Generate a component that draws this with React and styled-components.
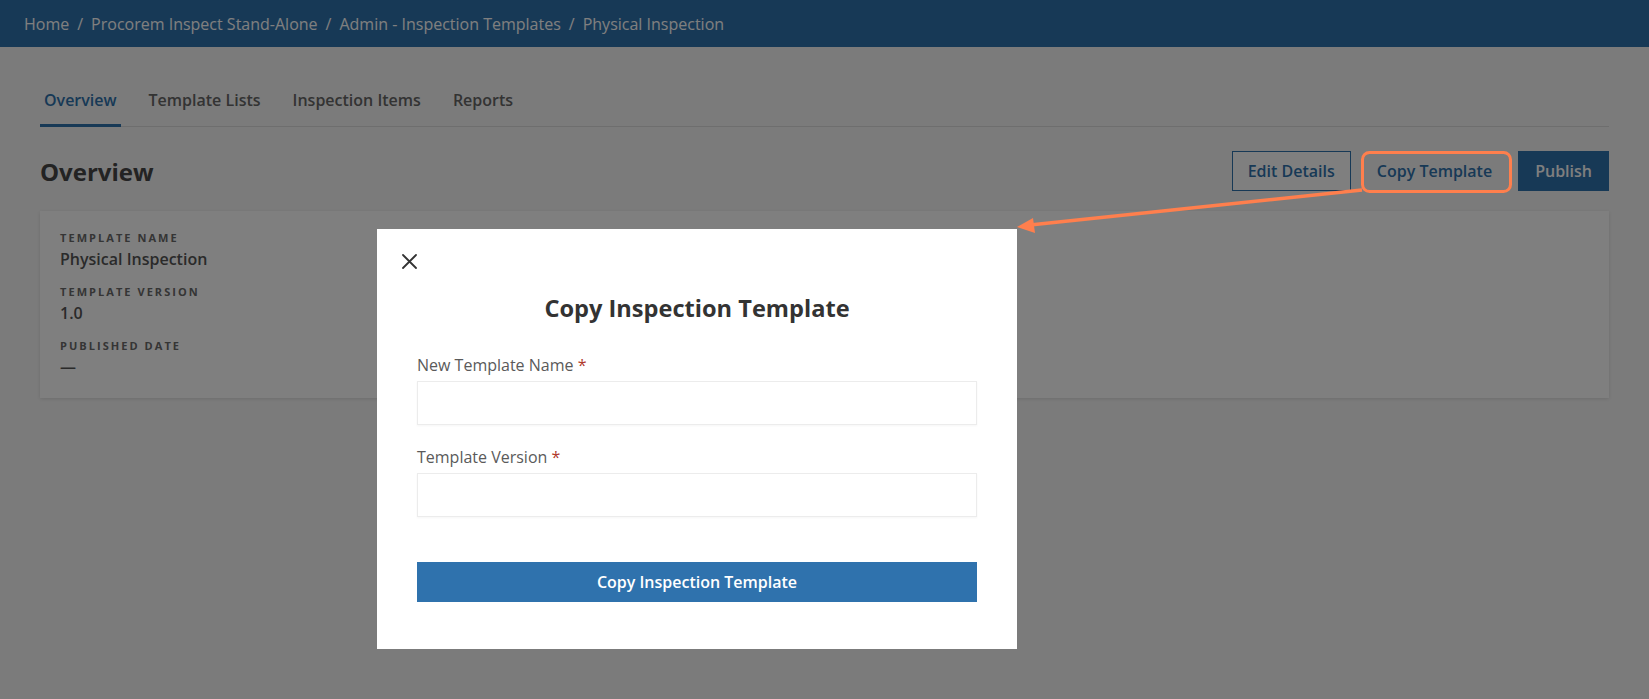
import React from "react";
import styled, { createGlobalStyle } from "styled-components";

const GlobalStyle = createGlobalStyle`
  html, body { margin: 0; padding: 0; }
  body {
    font-family: "Open Sans", "Noto Sans", "Liberation Sans", sans-serif;
    background: #f7f7f7;
    color: #333;
  }
  * { box-sizing: border-box; }
`;

const BRAND = "#2f72ad";

const Page = styled.div`
  min-height: 100vh;
  background: #f7f7f7;
`;

const Header = styled.header`
  height: 47px;
  background: ${BRAND};
  display: flex;
  align-items: center;
  padding: 0 24px;
`;

const Crumbs = styled.nav`
  display: flex;
  align-items: center;
  font-size: 16px;
  color: #ffffff;
  white-space: nowrap;
`;

const Sep = styled.span`
  padding: 0 8px;
`;

const Main = styled.main`
  padding: 0 40px;
`;

const Tabs = styled.div`
  display: flex;
  gap: 24px;
  margin-top: 29px;
  box-shadow: inset 0 -1px 0 #dcdcdc;
`;

const Tab = styled.div`
  padding: 14px 4px;
  font-size: 16px;
  font-weight: 600;
  line-height: 20px;
  color: ${(p) => (p.$active ? BRAND : "#666")};
  border-bottom: 3px solid ${(p) => (p.$active ? BRAND : "transparent")};
`;

const TitleRow = styled.div`
  display: flex;
  align-items: center;
  justify-content: space-between;
  margin-top: 24px;
  height: 40px;
`;

const Heading = styled.h1`
  margin: 0;
  font-size: 24px;
  font-weight: 700;
  color: #464646;
`;

const Actions = styled.div`
  display: flex;
  gap: 8px;
`;

const Button = styled.button`
  height: 40px;
  padding: 0 ${(p) => p.$pad || 16}px;
  font-family: inherit;
  font-size: 16px;
  font-weight: 600;
  border-radius: 0;
  cursor: pointer;
  border: 1px solid
    ${(p) => (p.$variant === "ghost" ? "transparent" : BRAND)};
  background: ${(p) =>
    p.$variant === "primary" ? BRAND : p.$variant === "ghost" ? "transparent" : "#fff"};
  color: ${(p) => (p.$variant === "primary" ? "#fff" : BRAND)};
`;

const Card = styled.section`
  margin-top: 20px;
  background: #fff;
  padding: 19px 20px 20px;
  box-shadow: 0 1px 4px rgba(0, 0, 0, 0.12);
  display: flex;
  flex-direction: column;
`;

const FieldLabel = styled.div`
  font-size: 11px;
  line-height: 16px;
  font-weight: 700;
  letter-spacing: 2.05px;
  text-transform: uppercase;
  color: #6a6a6a;
  margin-top: ${(p) => (p.$first ? 0 : 14)}px;
`;

const FieldValue = styled.div`
  font-size: 16px;
  line-height: 22px;
  font-weight: 600;
  color: #555;
  margin-top: 2px;
`;

const Overlay = styled.div`
  position: fixed;
  inset: 0;
  background: rgba(0, 0, 0, 0.5);
  z-index: 10;
`;

const Modal = styled.div`
  position: absolute;
  left: 377px;
  top: 229px;
  width: 640px;
  background: #fff;
  padding: 63px 40px 47px;
  display: flex;
  flex-direction: column;
`;

const Close = styled.button`
  position: absolute;
  left: 24px;
  top: 24px;
  width: 17px;
  height: 17px;
  padding: 0;
  border: 0;
  background: transparent;
  display: flex;
  align-items: center;
  justify-content: center;
  cursor: pointer;
`;

const ModalTitle = styled.h2`
  margin: 0;
  text-align: center;
  font-size: 23.6px;
  line-height: 32px;
  font-weight: 700;
  color: #333;
`;

const Form = styled.form`
  display: flex;
  flex-direction: column;
  margin-top: 30px;
`;

const Label = styled.label`
  font-size: 16px;
  line-height: 22px;
  color: #5a5a5a;
  margin-top: ${(p) => (p.$first ? 0 : 21)}px;
  margin-bottom: 5px;
`;

const Req = styled.span`
  color: #b0392c;
`;

const Input = styled.input`
  height: 44px;
  width: 100%;
  border: 1px solid #ececec;
  box-shadow: 0 1px 2px rgba(0, 0, 0, 0.04);
  font-family: inherit;
  font-size: 16px;
  padding: 0 12px;
  outline: none;
`;

const Submit = styled.button`
  margin-top: 45px;
  height: 40px;
  width: 100%;
  border: 0;
  background: ${BRAND};
  color: #fff;
  font-family: inherit;
  font-size: 16px;
  font-weight: 600;
  cursor: pointer;
`;

const Annotation = styled.svg`
  position: fixed;
  left: 0;
  top: 0;
  width: 1649px;
  height: 699px;
  z-index: 20;
  pointer-events: none;
`;

const CORAL = "#ff7f4d";

export default function App() {
  return (
    <>
      <GlobalStyle />
      <Page>
        <Header>
          <Crumbs>
            <span>Home</span>
            <Sep>/</Sep>
            <span>Procorem Inspect Stand-Alone</span>
            <Sep>/</Sep>
            <span>Admin - Inspection Templates</span>
            <Sep>/</Sep>
            <span>Physical Inspection</span>
          </Crumbs>
        </Header>
        <Main>
          <Tabs>
            <Tab $active>Overview</Tab>
            <Tab>Template Lists</Tab>
            <Tab>Inspection Items</Tab>
            <Tab>Reports</Tab>
          </Tabs>
          <TitleRow>
            <Heading>Overview</Heading>
            <Actions>
              <Button $pad={15}>Edit Details</Button>
              <Button $variant="ghost" $pad={17}>Copy Template</Button>
              <Button $variant="primary">Publish</Button>
            </Actions>
          </TitleRow>
          <Card>
            <FieldLabel $first>Template Name</FieldLabel>
            <FieldValue>Physical Inspection</FieldValue>
            <FieldLabel>Template Version</FieldLabel>
            <FieldValue>1.0</FieldValue>
            <FieldLabel>Published Date</FieldLabel>
            <FieldValue>—</FieldValue>
          </Card>
        </Main>
      </Page>
      <Overlay>
        <Modal>
          <Close aria-label="Close">
            <svg width="17" height="17" viewBox="0 0 17 17">
              <path d="M2 2 L15 15 M15 2 L2 15" stroke="#333" strokeWidth="1.8" strokeLinecap="round" />
            </svg>
          </Close>
          <ModalTitle>Copy Inspection Template</ModalTitle>
          <Form onSubmit={(e) => e.preventDefault()}>
            <Label $first>
              New Template Name <Req>*</Req>
            </Label>
            <Input />
            <Label>
              Template Version <Req>*</Req>
            </Label>
            <Input />
            <Submit type="submit">Copy Inspection Template</Submit>
          </Form>
        </Modal>
      </Overlay>
      <Annotation viewBox="0 0 1649 699">
        <rect x="1362.5" y="152.5" width="148" height="39" rx="7" fill="none" stroke={CORAL} strokeWidth="3" />
        <line x1="1362" y1="190" x2="1030" y2="225" stroke={CORAL} strokeWidth="3.5" />
        <polygon points="1017,227 1033,218 1035,233" fill={CORAL} />
      </Annotation>
    </>
  );
}
